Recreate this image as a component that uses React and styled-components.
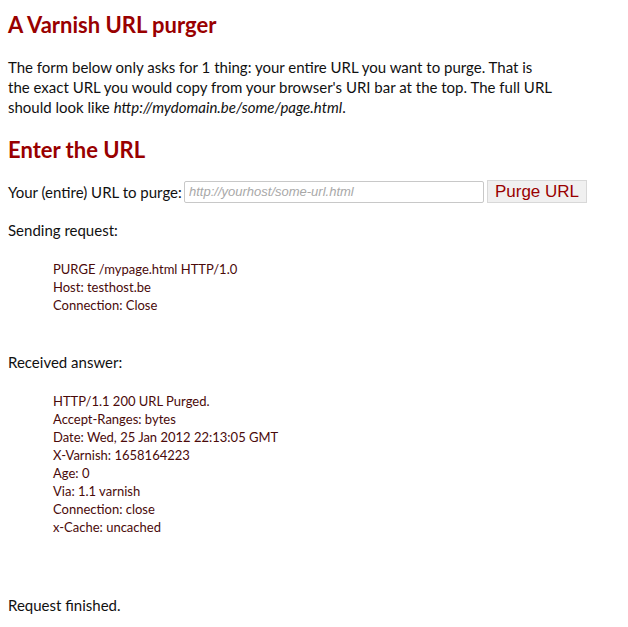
import React from "react";
import styled, { createGlobalStyle } from "styled-components";

const Global = createGlobalStyle`
  html, body { margin: 0; padding: 0; background: #fff; }
  body {
    padding: 0 8px;
    font-family: Lato, "Open Sans", sans-serif;
    font-size: 15px;
    color: #111;
  }
`;

const Page = styled.div`
  display: flow-root;
`;

const Title = styled.h1`
  margin: 11px 0 0;
  font-size: 22px;
  line-height: 28px;
  font-weight: 700;
  color: #990000;
`;

const Sub = styled.h2`
  margin: 19px 0 0;
  font-size: 22px;
  line-height: 28px;
  font-weight: 700;
  color: #990000;
`;

const Para = styled.p`
  margin: ${(p) => p.$mt}px 0 0;
  line-height: 20px;
  white-space: nowrap;
`;

const FormRow = styled.form`
  display: flex;
  align-items: center;
  margin-top: 16px;
  height: 23px;
`;

const Label = styled.label`
  white-space: nowrap;
  width: 176px;
`;

const Input = styled.input`
  box-sizing: border-box;
  width: 300px;
  height: 22px;
  border: 1px solid #c8c8c8;
  border-radius: 2px;
  padding: 0 4px;
  margin: 0;
  font-family: "Liberation Sans", Arial, sans-serif;
  font-size: 13px;
  &::placeholder {
    color: #a8a8a8;
    font-style: italic;
  }
`;

const Button = styled.button`
  box-sizing: border-box;
  width: 100px;
  height: 23px;
  margin: 0 0 0 3px;
  border: 1px solid #d8d8d8;
  background: #f0f0f0;
  color: #990000;
  font-family: "Liberation Sans", Arial, sans-serif;
  font-size: 17px;
  padding: 0;
  line-height: 21px;
`;

const Block = styled.div`
  margin: ${(p) => p.$mt}px 0 0 45px;
  color: #4a0a0a;
  font-size: 13px;
  line-height: 18px;
`;

const Line = styled.div`
  white-space: nowrap;
`;

const request = [
  "PURGE /mypage.html HTTP/1.0",
  "Host: testhost.be",
  "Connection: Close",
];

const answer = [
  "HTTP/1.1 200 URL Purged.",
  "Accept-Ranges: bytes",
  "Date: Wed, 25 Jan 2012 22:13:05 GMT",
  "X-Varnish: 1658164223",
  "Age: 0",
  "Via: 1.1 varnish",
  "Connection: close",
  "x-Cache: uncached",
];

export default function App() {
  return (
    <Page>
      <Global />
      <Title>A Varnish URL purger</Title>
      <Para $mt={18}>
        The form below only asks for 1 thing: your entire URL you want to purge. That is
        <br />
        the exact URL you would copy from your browser's URI bar at the top. The full URL
        <br />
        should look like <i>http://mydomain.be/some/page.html</i>.
      </Para>
      <Sub>Enter the URL</Sub>
      <FormRow onSubmit={(e) => e.preventDefault()}>
        <Label>Your (entire) URL to purge:</Label>
        <Input placeholder="http://yourhost/some-url.html" />
        <Button type="submit">Purge URL</Button>
      </FormRow>
      <Para $mt={17}>Sending request:</Para>
      <Block $mt={20}>
        {request.map((l) => (
          <Line key={l}>{l}</Line>
        ))}
      </Block>
      <Para $mt={38}>Received answer:</Para>
      <Block $mt={20}>
        {answer.map((l) => (
          <Line key={l}>{l}</Line>
        ))}
      </Block>
      <Para $mt={59}>Request finished.</Para>
    </Page>
  );
}
